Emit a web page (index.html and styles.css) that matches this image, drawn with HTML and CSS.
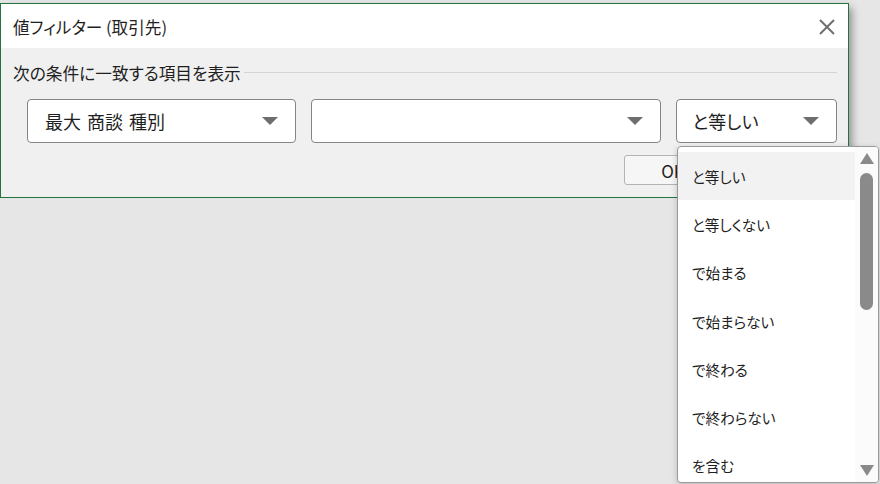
FILE: index.html
```html
<!DOCTYPE html>
<html lang="ja">
<head>
    <meta charset="UTF-8">
    <title>値フィルター</title>
    <link rel="stylesheet" href="styles.css">
</head>
<body>
    <div class="dialog">
        <div class="titlebar">
            <span class="title">値フィルター (取引先)</span>
            <svg class="close" width="16" height="16" viewBox="0 0 16 16">
                <path d="M1 1 L15 15 M15 1 L1 15" stroke="#707070" stroke-width="2" fill="none"/>
            </svg>
        </div>
        <div class="dialog-body">
            <div class="section">
                <span>次の条件に一致する項目を表示</span>
                <div class="rule"></div>
            </div>
            <div class="combos">
                <div class="combo combo-field"><span>最大 商談 種別</span><i class="caret"></i></div>
                <div class="combo combo-value"><span></span><i class="caret"></i></div>
                <div class="combo combo-op"><span>と等しい</span><i class="caret"></i></div>
            </div>
            <div class="buttons">
                <button class="btn">OK</button>
                <button class="btn">キャンセル</button>
            </div>
        </div>
    </div>

    <div class="menu">
        <ul class="menu-list">
            <li class="selected">と等しい</li>
            <li>と等しくない</li>
            <li>で始まる</li>
            <li>で始まらない</li>
            <li>で終わる</li>
            <li>で終わらない</li>
            <li>を含む</li>
        </ul>
        <div class="scrollbar">
            <i class="arrow-up"></i>
            <div class="thumb"></div>
            <i class="arrow-down"></i>
        </div>
    </div>
</body>
</html>
```

FILE: styles.css
```css
body {
    margin: 0;
    padding-top: 3px;
    background: #e6e6e6;
    font-family: "Noto Sans CJK JP", "Noto Sans", sans-serif;
    font-feature-settings: "palt";
    color: #1f1f1f;
}
.dialog {
    width: 849px;
    box-sizing: border-box;
    border: 1px solid #22743f;
    background: #f0f0f0;
    box-shadow: 3px 5px 8px rgba(0, 0, 0, 0.38);
}
.titlebar {
    height: 44px;
    background: #fff;
    display: flex;
    align-items: center;
    justify-content: space-between;
    padding: 0 13px 0 12px;
}
.title {
    font-size: 16.6px;
    line-height: 20px;
    margin-top: 2px;
}
.close {
    margin-top: 2px;
}
.dialog-body {
    padding: 0 11px 12px 12px;
}
.section {
    display: flex;
    align-items: center;
    height: 46px;
    font-size: 16.7px;
}
.section span {
    margin-top: 4px;
}
.rule {
    flex: 1;
    height: 1px;
    background: #d4d4d4;
    margin: 3px 0 0 3px;
}
.combos {
    display: flex;
    gap: 15px;
    padding-left: 14px;
    margin-top: 5px;
}
.combo {
    height: 44px;
    box-sizing: border-box;
    border: 1px solid #858585;
    border-radius: 4px;
    background: #fff;
    display: flex;
    align-items: center;
    justify-content: space-between;
    padding: 0 17px 0 17px;
    font-size: 18px;
}
.combo-field {
    width: 270px;
    word-spacing: 2px;
}
.combo-value {
    width: 351px;
}
.combo-op {
    width: 161px;
    padding-left: 15px;
}
.caret {
    width: 0;
    height: 0;
    border-left: 8px solid transparent;
    border-right: 8px solid transparent;
    border-top: 8px solid #6e6e6e;
}
.buttons {
    display: flex;
    justify-content: flex-end;
    gap: 8px;
    margin-top: 12px;
}
.btn {
    height: 30px;
    width: 98px;
    border: 1px solid #b4b4b4;
    border-radius: 3px;
    background: #f6f6f6;
    font-family: inherit;
    font-size: 17px;
    color: #1f1f1f;
}
.btn:last-child {
    width: 107px;
}

/* dropdown list of the operator combo */
.menu {
    position: absolute;
    left: 677px;
    top: 146px;
    width: 202px;
    height: 337px;
    box-sizing: border-box;
    border: 1px solid #9a9a9a;
    border-radius: 4px;
    background: #fff;
    box-shadow: 0 2px 6px rgba(0, 0, 0, 0.2);
    display: flex;
    overflow: hidden;
}
.menu-list {
    list-style: none;
    margin: 0;
    padding: 5px 0 0 0;
    flex: 1;
}
.menu-list li {
    height: 48.3px;
    display: flex;
    align-items: center;
    padding-left: 14px;
    font-size: 14.6px;
}
.menu-list li.selected {
    background: #f2f2f2;
}
.scrollbar {
    width: 23px;
    background: #fbfbfb;
    display: flex;
    flex-direction: column;
    align-items: center;
    padding-top: 6px;
}
.arrow-up {
    width: 0;
    height: 0;
    border-left: 7.5px solid transparent;
    border-right: 7.5px solid transparent;
    border-bottom: 11px solid #8a8a8a;
}
.thumb {
    width: 13px;
    height: 137px;
    margin-top: 9px;
    border-radius: 7px;
    background: #8a8a8a;
}
.arrow-down {
    width: 0;
    height: 0;
    margin-top: auto;
    margin-bottom: 6px;
    border-left: 7.5px solid transparent;
    border-right: 7.5px solid transparent;
    border-top: 11px solid #8a8a8a;
}
```
